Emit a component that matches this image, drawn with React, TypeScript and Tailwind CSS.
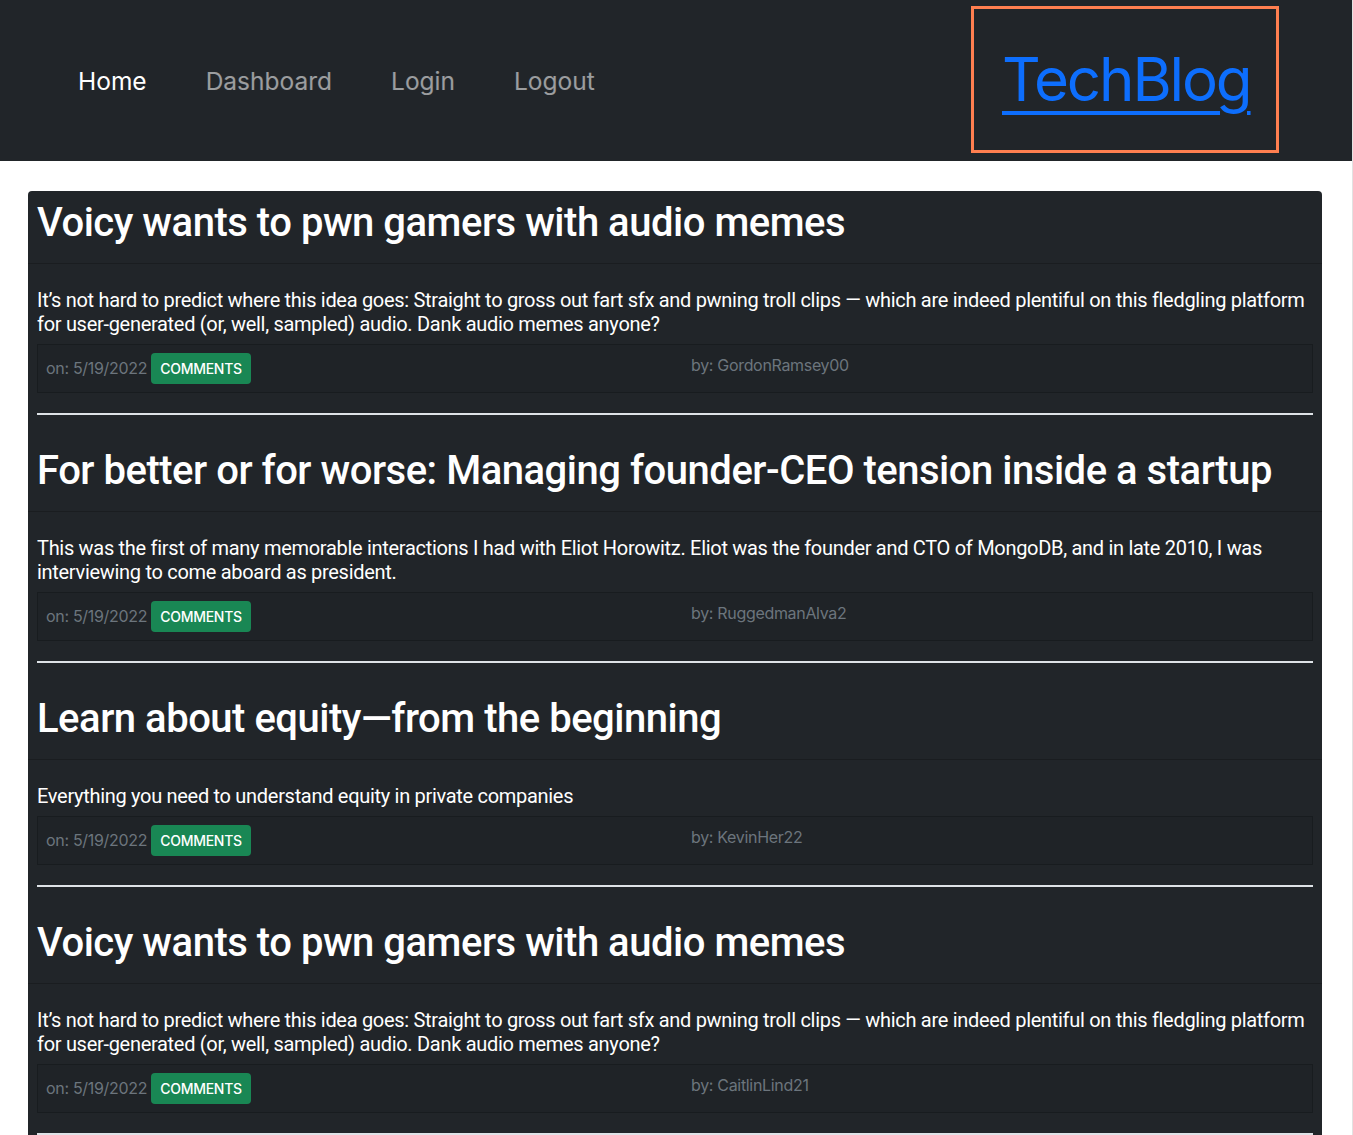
import React from 'react';

interface Post {
  title: string;
  body: string;
  date: string;
  author: string;
}

const posts: Post[] = [
  {
    title: 'Voicy wants to pwn gamers with audio memes',
    body: 'It’s not hard to predict where this idea goes: Straight to gross out fart sfx and pwning troll clips — which are indeed plentiful on this fledgling platform for user-generated (or, well, sampled) audio. Dank audio memes anyone?',
    date: '5/19/2022',
    author: 'GordonRamsey00',
  },
  {
    title: 'For better or for worse: Managing founder-CEO tension inside a startup',
    body: 'This was the first of many memorable interactions I had with Eliot Horowitz. Eliot was the founder and CTO of MongoDB, and in late 2010, I was interviewing to come aboard as president.',
    date: '5/19/2022',
    author: 'RuggedmanAlva2',
  },
  {
    title: 'Learn about equity—from the beginning',
    body: 'Everything you need to understand equity in private companies',
    date: '5/19/2022',
    author: 'KevinHer22',
  },
  {
    title: 'Voicy wants to pwn gamers with audio memes',
    body: 'It’s not hard to predict where this idea goes: Straight to gross out fart sfx and pwning troll clips — which are indeed plentiful on this fledgling platform for user-generated (or, well, sampled) audio. Dank audio memes anyone?',
    date: '5/19/2022',
    author: 'CaitlinLind21',
  },
  {
    title: 'For better or for worse: Managing founder-CEO tension inside a startup',
    body: 'This was the first of many memorable interactions I had with Eliot Horowitz. Eliot was the founder and CTO of MongoDB, and in late 2010, I was interviewing to come aboard as president.',
    date: '5/19/2022',
    author: 'RuggedmanAlva2',
  },
];

function PostCard({ post }: { post: Post }) {
  return (
    <div>
      {/* Header */}
      <div className="px-[9px] pt-2 pb-2 border-b border-black/20">
        <h1 className="font-['Roboto',sans-serif] text-[40px] leading-[48px] font-medium text-white mb-2 tracking-[-0.012em]">
          {post.title}
        </h1>
      </div>

      <div className="px-[9px]">
        {/* Body */}
        <div className="pt-6 pb-2">
          <p className="font-['Roboto',sans-serif] text-[20px] leading-6 text-white tracking-[-0.015em]">{post.body}</p>
        </div>

        {/* Footer */}
        <div className="grid grid-cols-2 border border-black/20 bg-black/[0.03] px-2 py-2 tracking-[-0.02em]">
          <div className="text-[16px] leading-6 text-[#6c757d]">
            on: {post.date}{' '}
            <button className="inline-block rounded bg-[#198754] px-[9px] py-[5px] text-[14px] leading-[21px] font-medium text-white uppercase tracking-[-0.02em]">
              Comments
            </button>
          </div>
          <div className="pl-4 text-[16px] leading-6 text-[#6c757d]">by: {post.author}</div>
        </div>

        <hr className="mt-5 mb-6 border-0 h-[2px] bg-[#dee2e6]" />
      </div>
    </div>
  );
}

export default function App() {
  return (
    <div
      className="min-h-screen w-[1353px] bg-white border-r border-[#e2e2e2]"
      style={{ fontFamily: 'Inter, "Liberation Sans", sans-serif' }}
    >
      {/* Navbar */}
      <nav className="h-[161px] bg-[#212529] flex items-center justify-between pl-[78px] pr-[73px]">
        <ul className="flex items-center gap-[59px] text-[24.5px] leading-9">
          <li className="text-white">Home</li>
          <li className="text-white/55">Dashboard</li>
          <li className="text-white/55">Login</li>
          <li className="text-white/55">Logout</li>
        </ul>
        <div className="mt-[-3px] w-[308px] h-[147px] border-[3px] border-[#ff7f50] flex items-center pl-[28px]">
          <a className="text-[60px] leading-none text-[#0d6efd] underline decoration-[4px] underline-offset-[10px] tracking-[-0.035em]">
            TechBlog
          </a>
        </div>
      </nav>

      {/* Posts */}
      <main className="pt-[30px] pl-[28px]">
        <div className="w-[1294px] bg-[#212529] rounded-t">
          {posts.map((post, i) => (
            <PostCard key={i} post={post} />
          ))}
        </div>
      </main>
    </div>
  );
}
